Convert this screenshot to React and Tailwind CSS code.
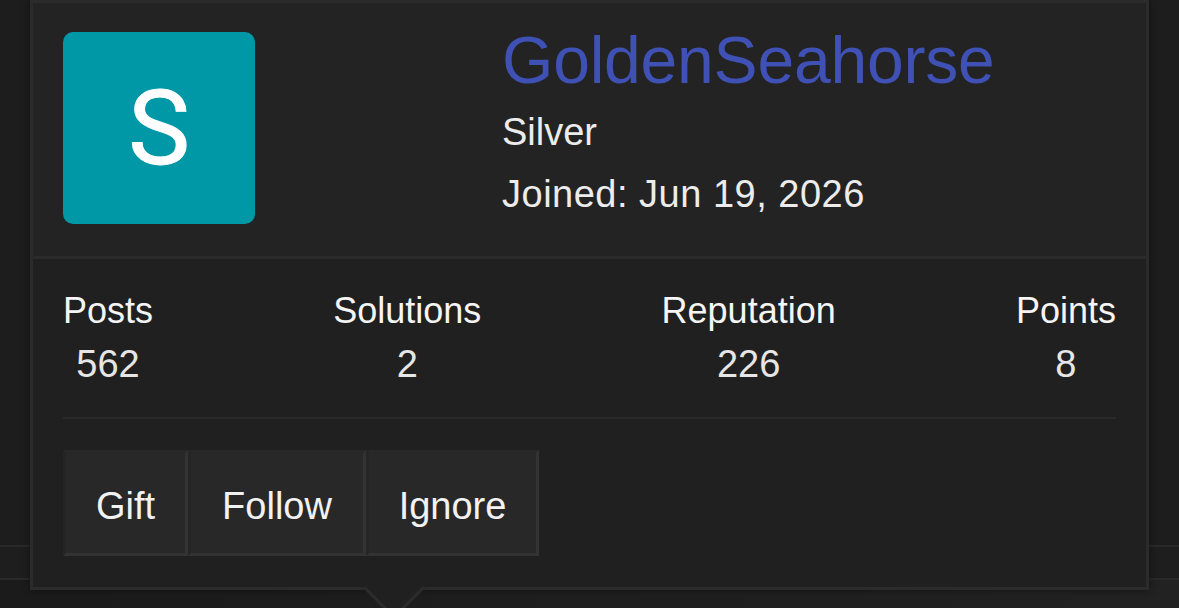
import React from 'react';

const stats = [
  { label: 'Posts', value: '562' },
  { label: 'Solutions', value: '2' },
  { label: 'Reputation', value: '226' },
  { label: 'Points', value: '8' },
];

const actions = [
  { label: 'Gift', width: 'w-[125px]' },
  { label: 'Follow', width: 'w-[178px]' },
  { label: 'Ignore', width: 'w-[173px]' },
];

function App() {
  return (
    <div className="relative w-[1179px] h-[608px] overflow-hidden bg-[#1d1d1d] font-['Liberation_Sans',Arial,sans-serif]">
      {/* page underneath the card */}
      <div className="pt-[545px]">
        <div className="h-[2px] bg-[#292929]" />
        <div className="h-[31px] bg-[#1e1e1e]" />
        <div className="h-[2px] bg-[#292929]" />
        <div className="h-[28px] bg-gradient-to-r from-[#1b1b1b] to-[#222222]" />
      </div>

      {/* member card */}
      <div className="absolute left-[30px] top-0 w-[1119px] border-[3px] border-[#2b2b2b] bg-[#202020] shadow-[0_0_8px_rgba(0,0,0,0.45)]">
        <div className="flex bg-[#232323] px-[30px] pt-[29px] pb-[31px] border-b-[3px] border-[#2b2b2b]">
          <div className="w-[192px] h-[192px] shrink-0 rounded-[10px] bg-[#0097a7] flex items-center justify-center">
            <span className="font-['Roboto',sans-serif] text-[104px] leading-none text-white mt-[2px] [-webkit-text-stroke:1px_white]">S</span>
          </div>
          <div className="ml-[247px] -mt-[5px]">
            <div className="text-[66px] leading-[66px] tracking-[-0.2px] text-[#3f51b5]">GoldenSeahorse</div>
            <div className="mt-[8px] text-[38px] leading-[62px] text-[#ececec]">Silver</div>
            <div className="text-[38px] leading-[62px] tracking-[0.5px] text-[#ececec]">Joined: Jun 19, 2026</div>
          </div>
        </div>

        <div className="px-[30px] pt-[30px] pb-[31px]">
          <div className="flex justify-between">
            {stats.map((s) => (
              <div key={s.label} className="text-center">
                <div className="text-[36px] leading-[44px] text-[#f5f5f5]">{s.label}</div>
                <div className="mt-[9px] text-[38px] leading-[44px] text-[#e6e6e6]">{s.value}</div>
              </div>
            ))}
          </div>

          <div className="mt-[31px] h-[2px] bg-[#2a2a2a]" />

          <div className="mt-[31px] flex">
            {actions.map((a) => (
              <button
                key={a.label}
                className={`${a.width} h-[106px] text-center bg-[#282828] border-[3px] border-t-[#282828] border-l-[#252525] border-r-[#333333] border-b-[#333333] text-[38px] leading-[100px] pt-[3px] text-[#f2f2f2]`}
              >
                {a.label}
              </button>
            ))}
          </div>
        </div>

        {/* pointer */}
        <div className="absolute left-[339px] top-[563px] w-[44px] h-[44px] rotate-45 bg-[#202020] border-r-[3px] border-b-[3px] border-[#2b2b2b]" />
      </div>
    </div>
  );
}

export default App;
